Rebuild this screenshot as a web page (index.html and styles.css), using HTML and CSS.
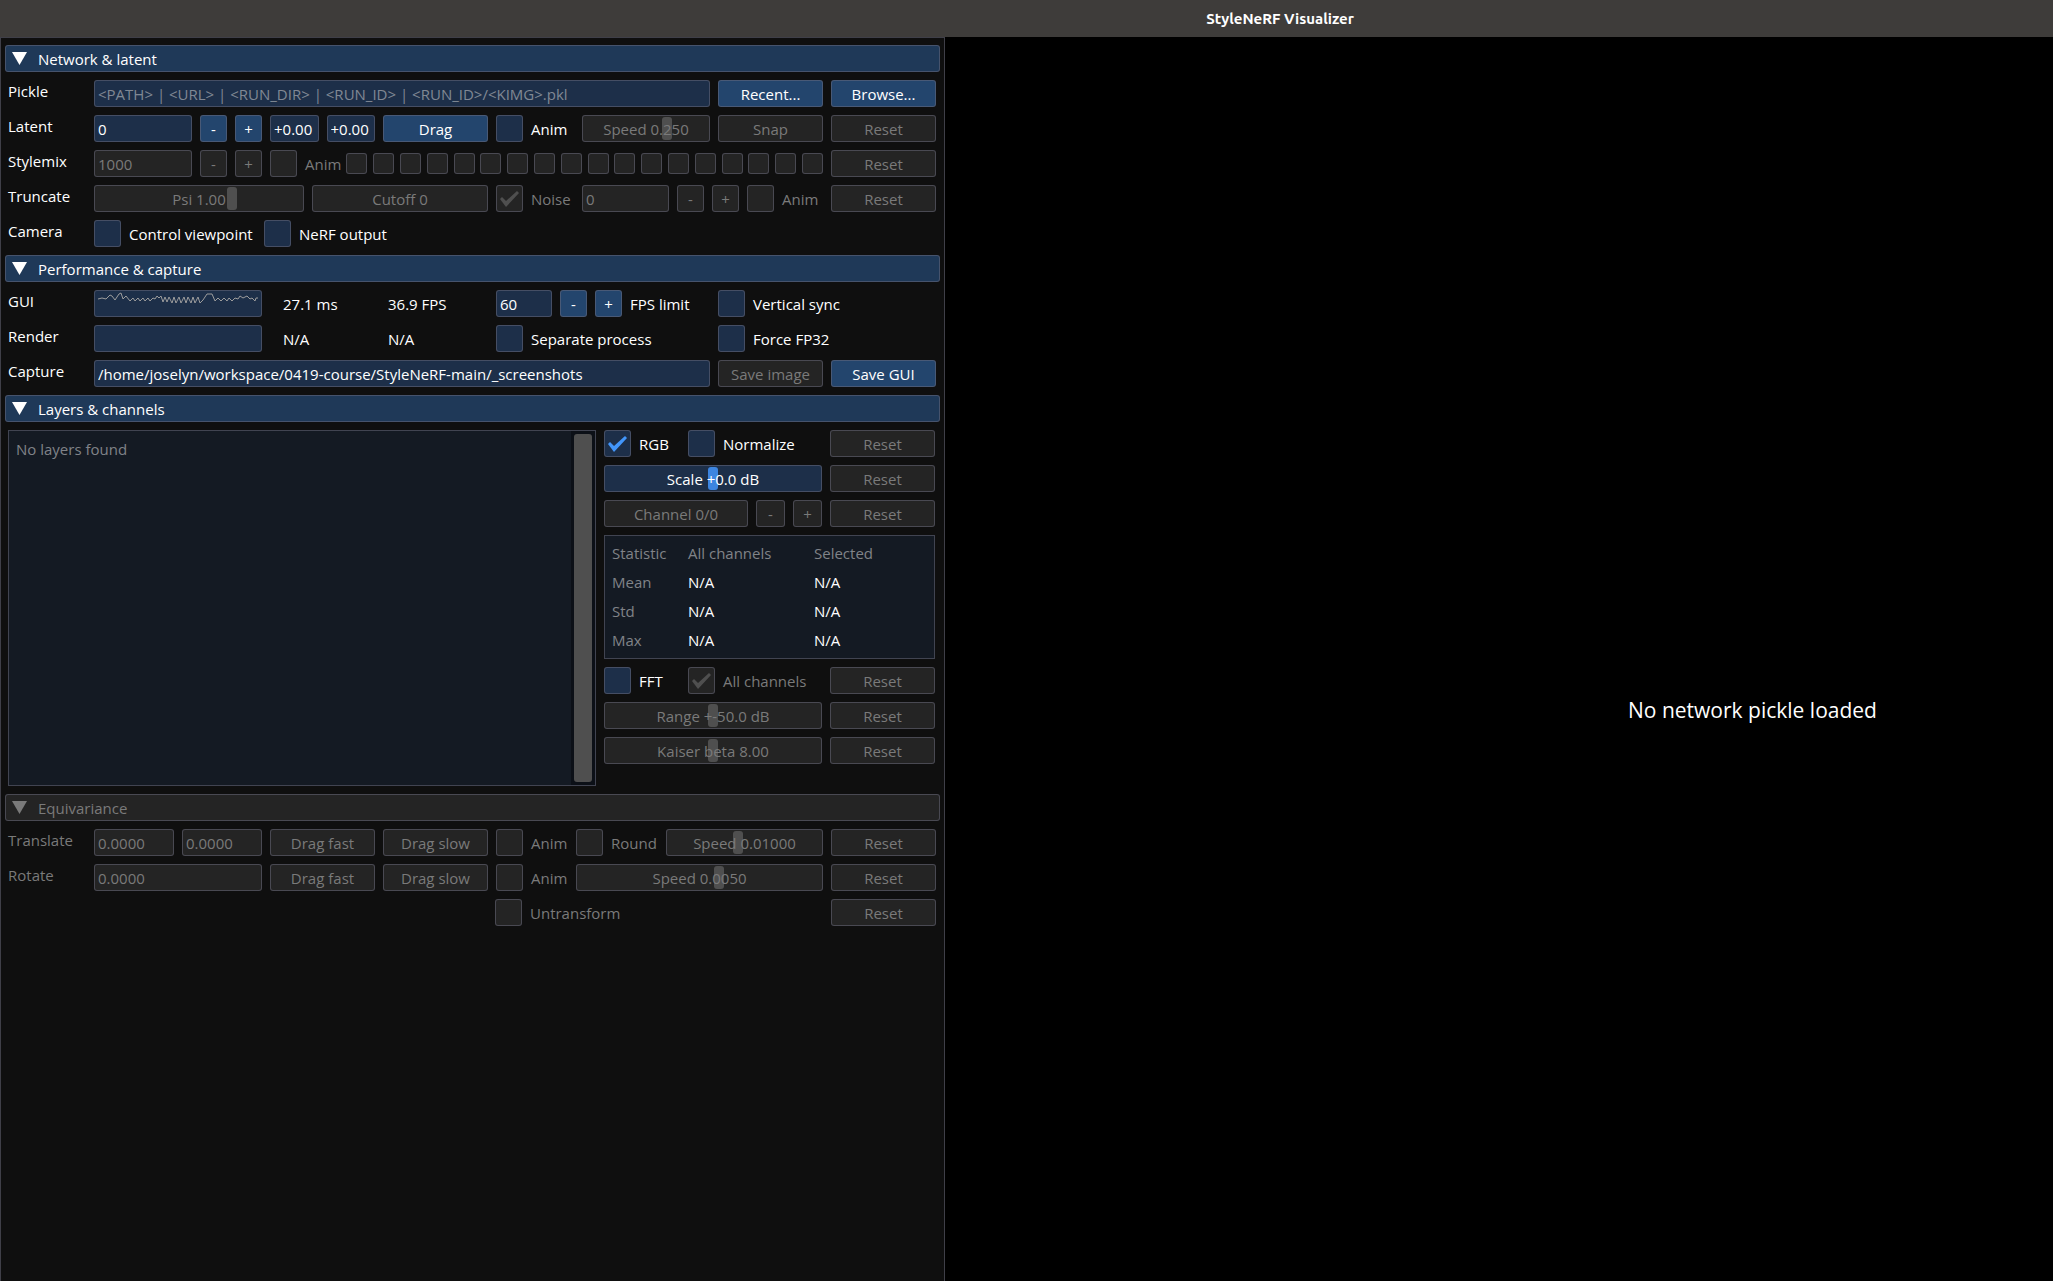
FILE: index.html
```
<!DOCTYPE html>
<html lang="en">

<head>
    <meta charset="UTF-8">
    <meta name="viewport" content="width=device-width, initial-scale=1.0">
    <title>StyleNeRF Visualizer</title>
    <link rel="stylesheet" href="styles.css">
</head>

<body>
    <header class="titlebar">StyleNeRF Visualizer</header>
    <div class="workspace">
        <main class="panel">

            <!-- Network & latent -->
            <details open>
                <summary><svg class="arrow" viewBox="0 0 15 13"><path d="M0 0h15L7.500 13z" /></svg>Network &amp; latent</summary>
                <div class="row">
                    <label class="name" for="pickle">Pickle</label>
                    <input class="field grow" type="text" id="pickle" placeholder="&lt;PATH&gt; | &lt;URL&gt; | &lt;RUN_DIR&gt; | &lt;RUN_ID&gt; | &lt;RUN_ID&gt;/&lt;KIMG&gt;.pkl">
                    <button class="wide">Recent...</button>
                    <button class="wide">Browse...</button>
                </div>
                <div class="row">
                    <label class="name" for="seed">Latent</label>
                    <input class="field seed" type="text" id="seed" value="0">
                    <button class="step">-</button>
                    <button class="step">+</button>
                    <div class="frac">
                        <input class="field grow" type="text" aria-label="Latent x" value="+0.00">
                        <input class="field grow" type="text" aria-label="Latent y" value="+0.00">
                    </div>
                    <button class="wide">Drag</button>
                    <label class="check toggle"><input type="checkbox">Anim</label>
                    <label class="slider grow"><input type="range" min="0" max="1000" value="684" disabled><span>Speed 0.250</span></label>
                    <button class="wide" disabled>Snap</button>
                    <button class="wide" disabled>Reset</button>
                </div>
                <div class="row">
                    <label class="name" for="mix">Stylemix</label>
                    <input class="field seed" type="text" id="mix" value="1000" disabled>
                    <button class="step" disabled>-</button>
                    <button class="step" disabled>+</button>
                    <div class="mix grow">
                        <label class="check"><input type="checkbox" disabled>Anim</label>
                        <div class="layers">
                            <input type="checkbox" aria-label="Layer 0" disabled>
                            <input type="checkbox" aria-label="Layer 1" disabled>
                            <input type="checkbox" aria-label="Layer 2" disabled>
                            <input type="checkbox" aria-label="Layer 3" disabled>
                            <input type="checkbox" aria-label="Layer 4" disabled>
                            <input type="checkbox" aria-label="Layer 5" disabled>
                            <input type="checkbox" aria-label="Layer 6" disabled>
                            <input type="checkbox" aria-label="Layer 7" disabled>
                            <input type="checkbox" aria-label="Layer 8" disabled>
                            <input type="checkbox" aria-label="Layer 9" disabled>
                            <input type="checkbox" aria-label="Layer 10" disabled>
                            <input type="checkbox" aria-label="Layer 11" disabled>
                            <input type="checkbox" aria-label="Layer 12" disabled>
                            <input type="checkbox" aria-label="Layer 13" disabled>
                            <input type="checkbox" aria-label="Layer 14" disabled>
                            <input type="checkbox" aria-label="Layer 15" disabled>
                            <input type="checkbox" aria-label="Layer 16" disabled>
                            <input type="checkbox" aria-label="Layer 17" disabled>
                        </div>
                    </div>
                    <button class="wide" disabled>Reset</button>
                </div>
                <div class="row">
                    <span class="name">Truncate</span>
                    <label class="slider psi"><input type="range" min="-100" max="200" value="100" disabled><span>Psi 1.00</span></label>
                    <label class="slider cutoff nograb"><input type="range" min="0" max="1" value="0" disabled><span>Cutoff 0</span></label>
                    <label class="check toggle"><input type="checkbox" checked disabled>Noise</label>
                    <input class="field grow" type="text" aria-label="Noise seed" value="0" disabled>
                    <button class="step" disabled>-</button>
                    <button class="step" disabled>+</button>
                    <label class="check last"><input type="checkbox" disabled>Anim</label>
                    <button class="wide" disabled>Reset</button>
                </div>
                <div class="row">
                    <span class="name">Camera</span>
                    <label class="check control"><input type="checkbox">Control viewpoint</label>
                    <label class="check"><input type="checkbox">NeRF output</label>
                </div>
            </details>

            <!-- Performance & capture -->
            <details open>
                <summary><svg class="arrow" viewBox="0 0 15 13"><path d="M0 0h15L7.500 13z" /></svg>Performance &amp; capture</summary>
                <div class="row">
                    <span class="name">GUI</span>
                    <svg class="plot" viewBox="1 1 166 25">
                        <polyline points="4,9 8,8 12,9 16,5 18,6 21,10 25,4 27,3 29,9 32,6 36,11 39,8 41,11 44,8 46,11 49,8 51,11 54,8 56,11 59,8 61,9 63,6 65,8 67,6 69,12 71,7 73,12 75,7 78,13 80,7 82,13 85,7 87,13 90,7 92,13 94,7 97,13 99,7 101,13 104,7 106,13 109,10 113,4 118,4 121,11 124,8 127,11 130,8 133,11 135,8 138,11 141,8 144,9 146,6 149,8 153,6 156,9 158,8 161,11 162,8 164,8" />
                    </svg>
                    <span class="stat first">27.1 ms</span>
                    <span class="stat grow">36.9 FPS</span>
                    <div class="limit">
                        <input class="field" type="text" id="fps" value="60">
                        <button class="step">-</button>
                        <button class="step">+</button>
                        <label for="fps">FPS limit</label>
                    </div>
                    <label class="check pair"><input type="checkbox">Vertical sync</label>
                </div>
                <div class="row">
                    <span class="name">Render</span>
                    <svg class="plot" viewBox="1 1 166 25"></svg>
                    <span class="stat first">N/A</span>
                    <span class="stat grow">N/A</span>
                    <label class="check limit"><input type="checkbox">Separate process</label>
                    <label class="check pair"><input type="checkbox">Force FP32</label>
                </div>
                <div class="row">
                    <label class="name" for="capture">Capture</label>
                    <input class="field grow" type="text" id="capture" value="/home/joselyn/workspace/0419-course/StyleNeRF-main/_screenshots">
                    <button class="wide" disabled>Save image</button>
                    <button class="wide">Save GUI</button>
                </div>
            </details>

            <!-- Layers & channels -->
            <details open>
                <summary><svg class="arrow" viewBox="0 0 15 13"><path d="M0 0h15L7.500 13z" /></svg>Layers &amp; channels</summary>
                <div class="columns">
                    <div class="list">
                        <p>No layers found</p>
                        <div class="scrollbar"><div class="thumb"></div></div>
                    </div>
                    <div class="channels">
                        <div class="line">
                            <label class="check rgb"><input type="checkbox" checked>RGB</label>
                            <label class="check grow"><input type="checkbox">Normalize</label>
                            <button class="wide" disabled>Reset</button>
                        </div>
                        <div class="line">
                            <label class="slider grow"><input type="range" min="-40" max="40" value="0"><span>Scale +0.0 dB</span></label>
                            <button class="wide" disabled>Reset</button>
                        </div>
                        <div class="line">
                            <label class="slider nograb grow"><input type="range" min="0" max="1" value="0" disabled><span>Channel 0/0</span></label>
                            <button class="step big" disabled>-</button>
                            <button class="step big" disabled>+</button>
                            <button class="wide" disabled>Reset</button>
                        </div>
                        <table class="stats">
                            <tr><th>Statistic</th><th>All channels</th><th>Selected</th></tr>
                            <tr><th>Mean</th><td>N/A</td><td>N/A</td></tr>
                            <tr><th>Std</th><td>N/A</td><td>N/A</td></tr>
                            <tr><th>Max</th><td>N/A</td><td>N/A</td></tr>
                        </table>
                        <div class="line">
                            <label class="check rgb"><input type="checkbox">FFT</label>
                            <label class="check grow"><input type="checkbox" checked disabled>All channels</label>
                            <button class="wide" disabled>Reset</button>
                        </div>
                        <div class="line">
                            <label class="slider grow"><input type="range" min="0" max="100" value="50" disabled><span>Range +-50.0 dB</span></label>
                            <button class="wide" disabled>Reset</button>
                        </div>
                        <div class="line">
                            <label class="slider grow"><input type="range" min="0" max="16" value="8" disabled><span>Kaiser beta 8.00</span></label>
                            <button class="wide" disabled>Reset</button>
                        </div>
                    </div>
                </div>
            </details>

            <!-- Equivariance -->
            <details class="off" open>
                <summary><svg class="arrow" viewBox="0 0 15 13"><path d="M0 0h15L7.500 13z" /></svg>Equivariance</summary>
                <div class="row">
                    <label class="name" for="tx">Translate</label>
                    <input class="field half" type="text" id="tx" value="0.0000" disabled>
                    <input class="field half" type="text" aria-label="Translate y" value="0.0000" disabled>
                    <button class="wide" disabled>Drag fast</button>
                    <button class="wide" disabled>Drag slow</button>
                    <label class="check anim"><input type="checkbox" disabled>Anim</label>
                    <label class="check round"><input type="checkbox" disabled>Round</label>
                    <label class="slider grow"><input type="range" min="0" max="1000" value="455" disabled><span>Speed 0.01000</span></label>
                    <button class="wide" disabled>Reset</button>
                </div>
                <div class="row">
                    <label class="name" for="angle">Rotate</label>
                    <input class="field full" type="text" id="angle" value="0.0000" disabled>
                    <button class="wide" disabled>Drag fast</button>
                    <button class="wide" disabled>Drag slow</button>
                    <label class="check anim"><input type="checkbox" disabled>Anim</label>
                    <label class="slider grow"><input type="range" min="0" max="1000" value="584" disabled><span>Speed 0.0050</span></label>
                    <button class="wide" disabled>Reset</button>
                </div>
                <div class="row end">
                    <label class="check untransform"><input type="checkbox" disabled>Untransform</label>
                    <button class="wide" disabled>Reset</button>
                </div>
            </details>
        </main>

        <section class="viewport">No network pickle loaded</section>
    </div>
</body>

</html>
```
FILE: styles.css
```
* {
    margin: 0;
    padding: 0;
    box-sizing: border-box;
}

:root {
    --line: rgba(110, 110, 128, 0.5);
    --frame: #1d2f49;
    --button: #23456d;
    --off: #242424;
    --dim: #7a7a7a;
}

body {
    display: flex;
    flex-direction: column;
    height: 100vh;
    overflow: hidden;
    background-color: #000;
    color: #fff;
    font: 15px/29px "Open Sans", "Noto Sans", sans-serif;
}

input,
button {
    font: inherit;
    color: inherit;
}

/* the window runs past the right and bottom edge of the screen */
.titlebar {
    height: 37px;
    padding-left: 507px;
    background-color: #3e3c3a;
    color: #fff;
    font: bold 15px/38px "Ubuntu", "Open Sans", sans-serif;
    text-align: center;
}

.workspace {
    flex: 1;
    display: grid;
    grid-template-columns: minmax(0, 945px) 1fr;
    min-height: 0;
}

.panel {
    display: flex;
    flex-direction: column;
    gap: 8px;
    padding: 7px 4px;
    border: 1px solid #3f3f48;
    border-bottom: 0;
    background-color: #0f0f0f;
}

.viewport {
    display: flex;
    justify-content: center;
    align-items: center;
    padding: 102px 0 0 507px;
    font-size: 21px;
}

summary {
    display: flex;
    align-items: center;
    gap: 11px;
    height: 27px;
    margin-bottom: 8px;
    padding: 2px 0 0 6px;
    border: 1px solid var(--line);
    border-radius: 3px;
    background-color: #1f3958;
    list-style: none;
}

.arrow {
    width: 15px;
    height: 13px;
    margin-bottom: 2px;
    fill: currentColor;
}

.off {
    color: var(--dim);
}

.off summary {
    background-color: var(--off);
}

.row,
.line {
    display: flex;
    gap: 8px;
    height: 27px;
}

.row {
    margin: 0 4px 8px 3px;
}

.row:last-child {
    margin-bottom: 0;
}

.row.end {
    justify-content: flex-end;
}

.name {
    flex: none;
    width: 78px;
    line-height: 23px;
}

.grow {
    flex: 1;
    min-width: 0;
}

.field {
    min-width: 0;
    height: 27px;
    padding: 2px 3px 0;
    border: 1px solid var(--line);
    border-radius: 3px;
    background-color: var(--frame);
}

.field::placeholder {
    color: #808894;
    opacity: 1;
}

.field:disabled {
    background-color: var(--off);
    color: var(--dim);
}

.seed {
    width: 98px;
}

.frac {
    display: flex;
    gap: 8px;
    width: 105px;
}

.half {
    width: 80px;
}

.full {
    width: 168px;
}

button {
    flex: none;
    height: 27px;
    padding-top: 2px;
    border: 1px solid var(--line);
    border-radius: 3px;
    background-color: var(--button);
    line-height: 23px;
    text-align: center;
}

button:disabled {
    background-color: var(--off);
    color: var(--dim);
}

.wide {
    width: 105px;
}

.step {
    width: 27px;
}

.step.big {
    width: 29px;
}

/* tick boxes */
.check {
    display: flex;
    gap: 8px;
    white-space: nowrap;
}

input[type="checkbox"] {
    appearance: none;
    flex: none;
    width: 27px;
    height: 27px;
    border: 1px solid var(--line);
    border-radius: 3px;
    background-color: var(--frame);
}

input[type="checkbox"]:checked::before {
    content: "";
    display: block;
    width: 25px;
    height: 25px;
    background-color: #4296fa;
    clip-path: polygon(3px 13px, 5px 11px, 9px 15px, 20px 5px, 22px 7px, 9px 21px);
}

input[type="checkbox"]:disabled {
    background-color: var(--off);
}

input[type="checkbox"]:disabled::before {
    background-color: #4f4f4f;
}

.check:has(:disabled) {
    color: var(--dim);
}

.toggle {
    width: 78px;
}

.anim {
    width: 72px;
}

.round {
    width: 82px;
}

.last {
    width: 76px;
}

.rgb {
    width: 76px;
}

.control {
    width: 162px;
}

.untransform {
    width: 328px;
}

.mix {
    display: flex;
    gap: 5px;
}

.layers {
    flex: 1;
    display: flex;
    justify-content: space-between;
    align-items: center;
}

.layers input[type="checkbox"] {
    width: 21px;
    height: 21px;
}

/* sliders: the value is written over the grab */
.slider {
    display: grid;
    border: 1px solid var(--line);
    border-radius: 3px;
    background-color: var(--frame);
    line-height: 27px;
    text-align: center;
}

.slider > * {
    grid-area: 1 / 1;
    min-width: 0;
}

.slider span {
    position: relative;
    height: 25px;
    pointer-events: none;
}

.slider input {
    appearance: none;
    width: 100%;
    height: 25px;
    padding: 0 1px;
    background: none;
}

.slider input::-webkit-slider-thumb {
    appearance: none;
    width: 10px;
    height: 23px;
    border-radius: 3px;
    background-color: #3d85e0;
}

.slider input:disabled::-webkit-slider-thumb {
    background-color: #4f4f4f;
}

.slider.nograb input::-webkit-slider-thumb {
    background: none;
}

.slider:has(:disabled) {
    background-color: var(--off);
    color: var(--dim);
}

.psi {
    width: 210px;
}

.cutoff {
    width: 176px;
}

/* frame timing */
.plot {
    flex: none;
    width: 168px;
    height: 27px;
    border: 1px solid var(--line);
    border-radius: 3px;
    background-color: var(--frame);
}

.plot polyline {
    fill: none;
    stroke: #9c9c9c;
    stroke-width: 1;
}

.stat.first {
    width: 97px;
    margin-left: 13px;
}

.limit {
    display: flex;
    gap: 8px;
    width: 214px;
}

.limit .field {
    width: 56px;
}

.pair {
    width: 218px;
}

/* layer list and channel controls */
.columns {
    display: grid;
    grid-template-columns: 1fr 331px;
    gap: 8px;
    margin: 0 5px 0 3px;
}

.list {
    display: flex;
    justify-content: space-between;
    height: 356px;
    border: 1px solid var(--line);
    background-color: #141a23;
    color: #808388;
}

.list p {
    padding: 4px 7px;
}

.scrollbar {
    width: 24px;
    padding: 3px;
    background-color: #0c1017;
}

.thumb {
    height: 100%;
    border-radius: 3px;
    background-color: #4f4f4f;
}

.channels {
    display: flex;
    flex-direction: column;
    gap: 8px;
}

.stats {
    width: 100%;
    height: 124px;
    padding: 3px 7px;
    border: 1px solid var(--line);
    border-spacing: 0;
    background-color: #141a23;
    table-layout: fixed;
}

.stats th {
    color: #808388;
    font-weight: normal;
    text-align: left;
}

.stats th:first-child {
    width: 76px;
}

.stats th:nth-child(2) {
    width: 126px;
}
```
